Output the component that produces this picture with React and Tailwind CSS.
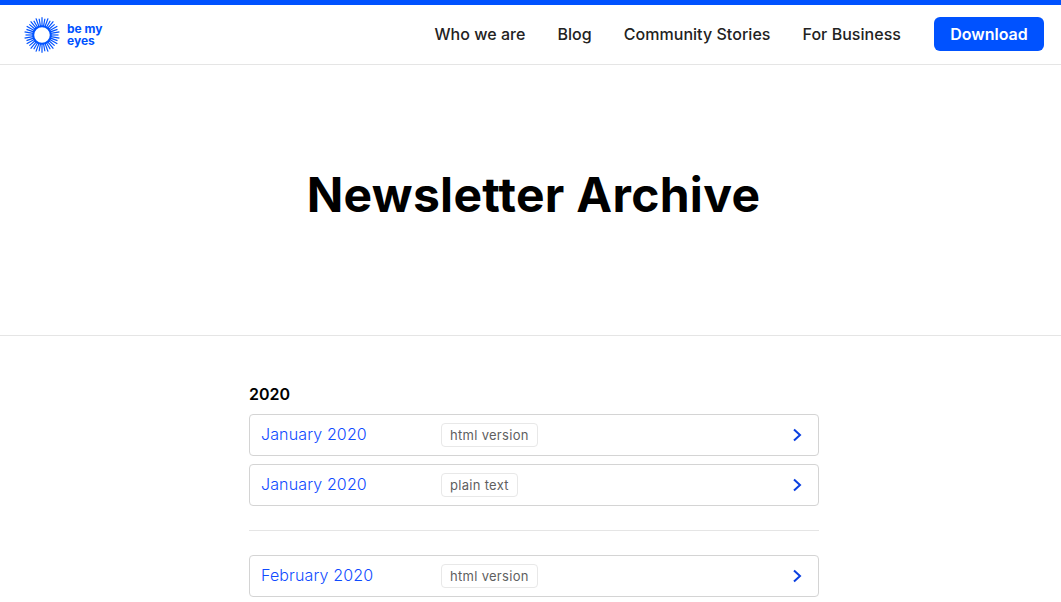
const rays = Array.from({ length: 36 }, (_, i) => (i * 360) / 36);

function Logo() {
  return (
    <svg width="36" height="36" viewBox="0 0 36 36" className="shrink-0">
      <g stroke="#0052ff" strokeWidth="1.2">
        {rays.map((a, i) => (
          <line key={a} x1="18" y1={i % 2 ? 1.5 : 0.3} x2="18" y2="9" transform={`rotate(${a} 18 18)`} />
        ))}
      </g>
      <circle cx="18" cy="18" r="8.8" fill="#fff" stroke="#0052ff" strokeWidth="2" />
    </svg>
  );
}

function Row({ title, tag }) {
  return (
    <a className="flex items-center h-[42px] pl-[11px] pr-[14px] border border-[#d4d4d4] rounded-[4px] bg-white">
      <span className="w-[180px] shrink-0 pb-[2px] text-[16px] font-light tracking-[0.13px] text-[#0f4bff]">{title}</span>
      <span className="h-[24px] px-2 pt-[2px] flex items-center border border-[#e8e8e8] rounded-[4px] text-[13px] tracking-[0.3px] text-[#5f5f5f]">{tag}</span>
      <svg width="14" height="14" viewBox="0 0 14 14" className="ml-auto" fill="none" stroke="#0a3fe0" strokeWidth="2">
        <path d="M4 1.5 L10 7 L4 12.5" />
      </svg>
    </a>
  );
}

export default function App() {
  return (
    <div className="h-[602px] overflow-hidden bg-white font-['Inter',sans-serif]">
      <header className="h-[65px] border-t-[5px] border-b border-t-[#0052ff] border-b-[#e5e5e5] flex items-center pl-[24px] pr-[17px]">
        <div className="flex items-center gap-[7px]">
          <Logo />
          <div className="text-[12px] leading-[11.5px] font-bold text-[#0052ff]">be my<br />eyes</div>
        </div>
        <nav className="ml-auto pb-[2px] flex items-center gap-8 text-[16px] tracking-[0.04px] font-medium text-[#222]">
          <a>Who we are</a>
          <a>Blog</a>
          <a>Community Stories</a>
          <a className="mr-[1px]">For Business</a>
          <a className="h-[34px] w-[110px] flex items-center justify-center rounded-[6px] bg-[#0052ff] text-white font-semibold tracking-normal">Download</a>
        </nav>
      </header>
      <section className="h-[271px] pb-[10px] pl-[6px] border-b border-[#e5e5e5] flex items-center justify-center">
        <h1 className="text-[48px] tracking-[0.3px] font-bold text-black">Newsletter Archive</h1>
      </section>
      <main className="w-[570px] ml-[249px] pt-[48px]">
        <h2 className="text-[16px] leading-[20px] font-semibold text-black mb-[10px]">2020</h2>
        <div className="flex flex-col gap-2">
          <Row title="January 2020" tag="html version" />
          <Row title="January 2020" tag="plain text" />
        </div>
        <hr className="my-6 border-[#e5e5e5]" />
        <Row title="February 2020" tag="html version" />
      </main>
    </div>
  );
}
